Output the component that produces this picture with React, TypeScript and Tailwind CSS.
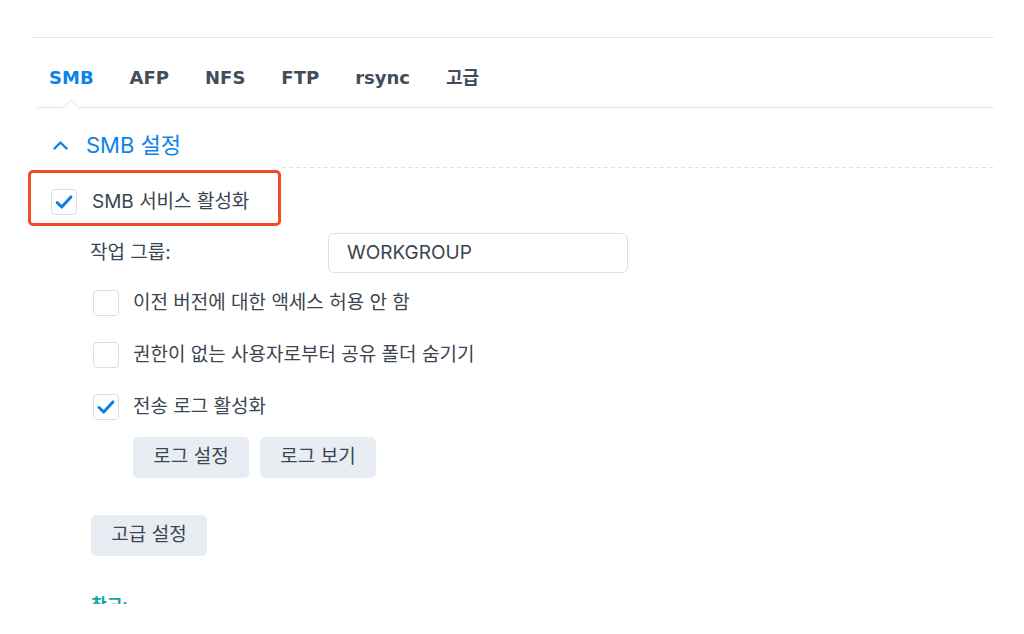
const TABS = ["SMB", "AFP", "NFS", "FTP", "rsync", "고급"];

function Checkbox({ checked = false }: { checked?: boolean }) {
  return (
    <span className="flex h-[26px] w-[26px] shrink-0 items-center justify-center rounded-[4px] border border-[#d5dfea] bg-white">
      {checked && (
        <svg width="26" height="26" viewBox="0 0 26 26" fill="none">
          <path d="M5.5 13.5 L10.5 18.5 L20.5 7.5" stroke="#0b7fe6" strokeWidth="3.2" strokeLinecap="round" strokeLinejoin="round" />
        </svg>
      )}
    </span>
  );
}

function CheckRow({ label, checked }: { label: string; checked?: boolean }) {
  return (
    <div className="flex h-[26px] items-center gap-[14px] pl-[61px]">
      <Checkbox checked={checked} />
      <span className="text-[19px] leading-[26px] text-[#3b4550]">{label}</span>
    </div>
  );
}

function GrayButton({ children }: { children: string }) {
  return (
    <button className="flex h-[41px] w-[116px] items-center justify-center rounded-[5px] bg-[#e8edf3] text-[19px] text-[#3b4651]">
      {children}
    </button>
  );
}

export default function App() {
  return (
    <div className="h-[634px] w-[1024px] overflow-hidden bg-white font-['Inter','Noto_Sans_CJK_KR',sans-serif]">
      <div className="h-[604px] overflow-hidden pl-[32px] pr-[30px] pt-[37px]">
        <div className="h-px bg-[#e1e8ef]" />

        {/* tabs */}
        <div className="ml-[5px] flex h-[70px] gap-[36px] border-b border-[#dde5ed] pl-[12px] font-['DejaVu_Sans','Noto_Sans_CJK_KR',sans-serif]">
          {TABS.map((t, i) => (
            <div key={t} className="relative pt-[28px]">
              <span className={`text-[18px] font-bold leading-[24px] ${i === 0 ? "text-[#0b84ea]" : "text-[#434d58]"}`}>{t}</span>
              {i === 0 && (
                <span className="absolute bottom-[-8px] left-1/2 h-[13px] w-[13px] -translate-x-1/2 rotate-45 border-l border-t border-[#dde5ed] bg-white" />
              )}
            </div>
          ))}
        </div>

        {/* section header */}
        <div className="mt-[23px] flex h-[28px] items-center gap-[18px] pl-[21px]">
          <svg width="15" height="10" viewBox="0 0 15 10" fill="none">
            <path d="M1.5 8.5 L7.5 2.5 L13.5 8.5" stroke="#0b84ea" strokeWidth="2.4" strokeLinecap="round" strokeLinejoin="round" />
          </svg>
          <span className="text-[22px] leading-[28px] text-[#0b84ea]">SMB 설정</span>
        </div>
        <div className="ml-[5px] mt-[8px] h-px bg-[linear-gradient(to_right,#d9e2eb_4px,transparent_4px)] bg-[length:7px_1px]" />

        {/* highlighted enable row */}
        <div className="relative -ml-[4px] mt-[2px] flex h-[56px] w-[253px] items-start gap-[15px] rounded-[5px] border-[3px] border-[#f24b26] pl-[20px] pt-[16px] shadow-[0_0_0_4px_white]">
          <Checkbox checked />
          <span className="whitespace-nowrap text-[19px] leading-[26px] text-[#3b4550]">SMB 서비스 활성화</span>
        </div>

        <div className="mt-[7px] flex h-[40px] items-center pl-[58px]">
          <span className="w-[238px] text-[19px] text-[#3b4550]">작업 그룹:</span>
          <div className="flex h-[40px] w-[300px] items-center rounded-[6px] border border-[#d7e1ec] pl-[18px] text-[19px] text-[#3b4550]">
            WORKGROUP
          </div>
        </div>

        <div className="mt-[17px] flex flex-col gap-[26px]">
          <CheckRow label="이전 버전에 대한 액세스 허용 안 함" />
          <CheckRow label="권한이 없는 사용자로부터 공유 폴더 숨기기" />
          <CheckRow label="전송 로그 활성화" checked />
        </div>

        <div className="mt-[17px] flex gap-[11px] pl-[101px]">
          <GrayButton>로그 설정</GrayButton>
          <GrayButton>로그 보기</GrayButton>
        </div>

        <div className="mt-[37px] flex pl-[59px]">
          <GrayButton>고급 설정</GrayButton>
        </div>

        <div className="mt-[37px] pl-[59px] text-[17px] font-bold leading-[24px] text-[#14a6a6]">참고:</div>
      </div>
    </div>
  );
}
